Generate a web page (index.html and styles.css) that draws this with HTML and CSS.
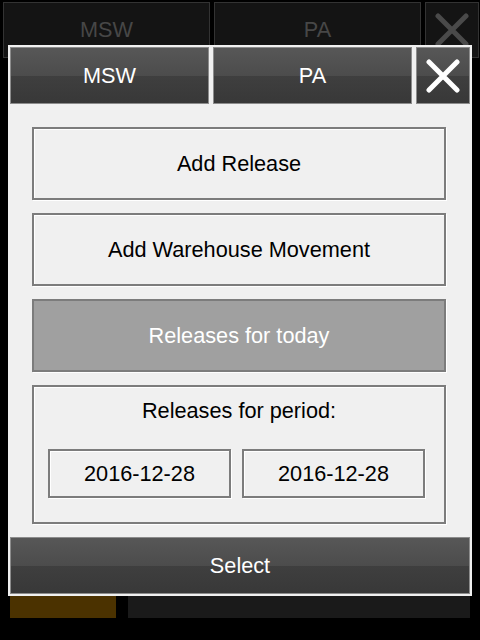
FILE: index.html
```html
<!DOCTYPE html>
<html lang="en">
<head>
    <meta charset="UTF-8">
    <meta name="viewport" content="width=device-width, initial-scale=1.0">
    <title>Releases</title>
    <link rel="stylesheet" href="styles.css">
</head>
<body>

    <div class="screen">
        <div class="topbar">
            <div class="bg-tab">MSW</div>
            <div class="bg-tab">PA</div>
            <div class="bg-tab bg-close">
                <svg width="34" height="34" viewBox="0 0 34 34"><path d="M3 3 L31 31 M31 3 L3 31" stroke="#4a4a4a" stroke-width="5" stroke-linecap="round"/></svg>
            </div>
        </div>
        <div class="bottombar">
            <div class="tile tile-warm"></div>
            <div class="tile tile-dark"></div>
        </div>
    </div>

    <div class="dialog">
        <div class="dialog-header">
            <div class="tab">MSW</div>
            <div class="tab">PA</div>
            <div class="tab tab-close">
                <svg width="34" height="34" viewBox="0 0 34 34"><path d="M3 3 L31 31 M31 3 L3 31" stroke="#fff" stroke-width="5" stroke-linecap="round"/></svg>
            </div>
        </div>

        <div class="dialog-body">
            <div class="button">Add Release</div>
            <div class="button">Add Warehouse Movement</div>
            <div class="button button-active">Releases for today</div>
            <div class="period">
                <div class="period-label">Releases for period:</div>
                <div class="period-dates">
                    <div class="date">2016-12-28</div>
                    <div class="date">2016-12-28</div>
                </div>
            </div>
        </div>

        <div class="select">Select</div>
    </div>

</body>
</html>
```

FILE: styles.css
```css
body {
    font-family: 'Liberation Sans', Arial, sans-serif;
    background-color: #000;
    margin: 0;
    font-size: 21.7px;
}
.screen {
    height: 640px;
    display: flex;
    flex-direction: column;
    justify-content: space-between;
}
.topbar {
    display: flex;
    gap: 4px;
    padding: 2px 2px 0 3px;
    height: 56px;
}
.bg-tab {
    flex: 0 0 207px;
    box-sizing: border-box;
    background-color: #141414;
    border: 1px solid #333;
    color: #474747;
    display: flex;
    justify-content: center;
    align-items: center;
}
.bg-tab.bg-close {
    flex: 0 0 54px;
}
.bottombar {
    display: flex;
    gap: 12px;
    padding: 0 10px 22px 10px;
    height: 50px;
}
.tile-warm {
    width: 106px;
    background-color: #4b3200;
}
.tile-dark {
    flex: 1;
    background-color: #1a1a1a;
}
.dialog {
    position: absolute;
    top: 45px;
    left: 8px;
    width: 464px;
    height: 551px;
    box-sizing: border-box;
    padding: 2px;
    background-color: #f0f0f0;
    display: flex;
    flex-direction: column;
}
.dialog-header {
    display: flex;
    gap: 4px;
    height: 57px;
}
.tab, .select {
    box-sizing: border-box;
    border: 1px solid #8c8c8c;
    background: linear-gradient(#575757 0%, #4c4c4c 50%, #3f3f3f 50%, #383838 100%);
    color: #fff;
    display: flex;
    justify-content: center;
    align-items: center;
}
.tab {
    flex: 0 0 199px;
}
.tab.tab-close {
    flex: 0 0 54px;
}
.dialog-body {
    flex: 1;
    padding: 23px 0 0 22px;
    display: flex;
    flex-direction: column;
    gap: 13px;
}
.button, .period, .date {
    box-sizing: border-box;
    border: 2px solid #7c7c7c;
    box-shadow: inset 1px 1px 0 #fff, 1px 1px 0 #fff;
}
.button {
    width: 414px;
    height: 73px;
    display: flex;
    justify-content: center;
    align-items: center;
    color: #000;
}
.button-active {
    background-color: #a0a0a0;
    color: #fff;
    box-shadow: 1px 1px 0 #fff;
}
.period {
    width: 414px;
    height: 139px;
    padding-top: 12px;
}
.period-label {
    text-align: center;
    line-height: 24px;
}
.period-dates {
    display: flex;
    gap: 11px;
    margin-top: 26px;
    padding-left: 14px;
}
.date {
    width: 183px;
    height: 49px;
    display: flex;
    justify-content: center;
    align-items: center;
}
.select {
    height: 57px;
}
```
